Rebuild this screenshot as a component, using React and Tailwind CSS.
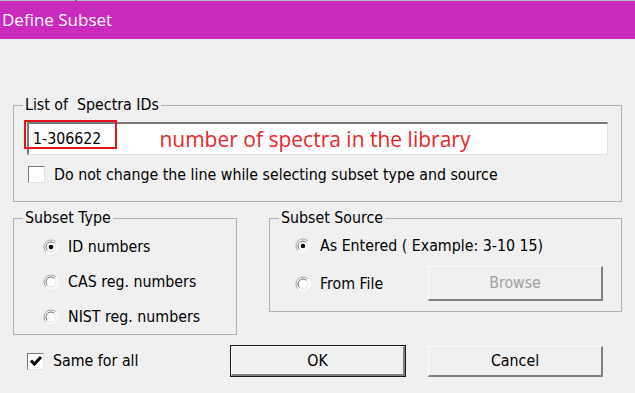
import { useState } from "react";

const ui = "font-['DejaVu_Sans_Condensed','Liberation_Sans',sans-serif] text-[15.8px] text-[#000]";

const Radio = ({ checked, label, onClick }) => (
  <div className="flex items-center h-[20px] cursor-default" onClick={onClick}>
    <svg width="16" height="16" viewBox="0 0 16 16" className="shrink-0">
      <circle cx="8" cy="8" r="7" fill="#fff" />
      <path d="M3.05 12.95 A7 7 0 0 1 12.95 3.05" fill="none" stroke="#a0a0a0" strokeWidth="1" />
      <path d="M12.95 3.05 A7 7 0 0 1 3.05 12.95" fill="none" stroke="#fbfbfb" strokeWidth="1" />
      <path d="M4.46 11.54 A5 5 0 0 1 11.54 4.46" fill="none" stroke="#696969" strokeWidth="1" />
      <path d="M11.54 4.46 A5 5 0 0 1 4.46 11.54" fill="none" stroke="#e3e3e3" strokeWidth="1" />
      {checked && <circle cx="8" cy="8" r="2.3" fill="#000" />}
    </svg>
    <span className="ml-[9px] whitespace-nowrap">{label}</span>
  </div>
);

const CheckBox = ({ checked, label, onClick }) => (
  <div className="flex items-center cursor-default" onClick={onClick}>
    <div className="w-[17px] h-[17px] bg-white border border-t-[#7a7a7a] border-l-[#7a7a7a] border-r-[#e3e3e3] border-b-[#e3e3e3] shrink-0 flex items-center justify-center">
      {checked && (
        <svg width="14" height="14" viewBox="0 0 14 14">
          <path d="M2 6.5 L5.3 10 L12 3" fill="none" stroke="#000" strokeWidth="3" />
        </svg>
      )}
    </div>
    <span className="ml-[9px] whitespace-nowrap">{label}</span>
  </div>
);

const Button = ({ children, isDefault, disabled, className }) => (
  <div
    className={`flex items-center justify-center ${isDefault ? "border border-[#1a1a1a]" : ""} ${className}`}
  >
    <div className="w-full h-full flex items-center justify-center bg-[#f0f0f0] border-t border-l border-t-[#fcfcfc] border-l-[#fcfcfc] border-r-2 border-b-2 border-r-[#808080] border-b-[#808080]">
      <span className={disabled ? "text-[#a0a0a0]" : "text-black"}>{children}</span>
    </div>
  </div>
);

const GroupBox = ({ title, className, bodyClass, children }) => (
  <fieldset className={`border border-[#b0b0b0] ${className}`}>
    <legend className="ml-[9px] px-[2px] leading-[16px] whitespace-pre">{title}</legend>
    <div className={bodyClass}>{children}</div>
  </fieldset>
);

export default function App() {
  const [keepLine, setKeepLine] = useState(false);
  const [sameForAll, setSameForAll] = useState(true);
  const [type, setType] = useState("id");
  const [source, setSource] = useState("entered");

  return (
    <div className={`w-[635px] h-[393px] bg-[#f0f0f0] flex flex-col overflow-hidden ${ui}`}>
      <div className="h-[1px] bg-[#bcbcbc] flex">
        <div className="ml-[75px] w-[2px] h-[2px] bg-[#707070]" />
      </div>
      <div className="h-[38px] bg-[#c92bbd] flex items-center pl-[2px] text-white text-[17px] font-['Open_Sans','Noto_Sans',sans-serif]">
        Define Subset
      </div>

      <div className="flex flex-col px-[13px] pt-[58px]">
        <GroupBox title="List of  Spectra IDs" className="h-[105px]" bodyClass="px-[13px]">
          <div className="relative mt-[9px] h-[33px] bg-white border-t-2 border-l-2 border-t-[#7a7a7a] border-l-[#7a7a7a] border-r border-b border-r-[#e3e3e3] border-b-[#e3e3e3] flex items-center">
            <div className="absolute left-[-5px] top-[-4px] w-[93px] h-[29px] border-2 border-[#e3141b]" />
            <span className="ml-[4px]">1-306622</span>
            <span className="ml-[58px] text-[#e8262b] text-[21px] font-['Open_Sans','Noto_Sans',sans-serif] leading-none">
              number of spectra in the library
            </span>
          </div>
          <div className="mt-[8px] ml-[1px]">
            <CheckBox
              checked={keepLine}
              onClick={() => setKeepLine(!keepLine)}
              label="Do not change the line while selecting subset type and source"
            />
          </div>
        </GroupBox>

        <div className="flex mt-[8px] items-start">
          <GroupBox title="Subset Type" className="w-[224px] h-[125px]" bodyClass="pl-[29px] pt-[11px]">
            <div className="flex flex-col gap-[15px]">
              <Radio checked={type === "id"} onClick={() => setType("id")} label="ID numbers" />
              <Radio checked={type === "cas"} onClick={() => setType("cas")} label="CAS reg. numbers" />
              <Radio checked={type === "nist"} onClick={() => setType("nist")} label="NIST reg. numbers" />
            </div>
          </GroupBox>

          <GroupBox title="Subset Source" className="ml-[32px] w-[353px] h-[102px]" bodyClass="pl-[25px] pt-[10px]">
            <Radio
              checked={source === "entered"}
              onClick={() => setSource("entered")}
              label="As Entered ( Example: 3-10 15)"
            />
            <div className="flex items-center mt-[10px] h-[35px]">
              <div className="w-[133px]">
                <Radio checked={source === "file"} onClick={() => setSource("file")} label="From File" />
              </div>
              <Button disabled className="w-[175px] h-[35px]">Browse</Button>
            </div>
          </GroupBox>
        </div>

        <div className="flex items-center mt-[10px] h-[32px]">
          <div className="ml-[14px] w-[203px]">
            <CheckBox checked={sameForAll} onClick={() => setSameForAll(!sameForAll)} label="Same for all" />
          </div>
          <Button isDefault className="w-[176px] h-[32px]">OK</Button>
          <Button className="ml-[22px] w-[175px] h-[31px]">Cancel</Button>
        </div>
      </div>
    </div>
  );
}
